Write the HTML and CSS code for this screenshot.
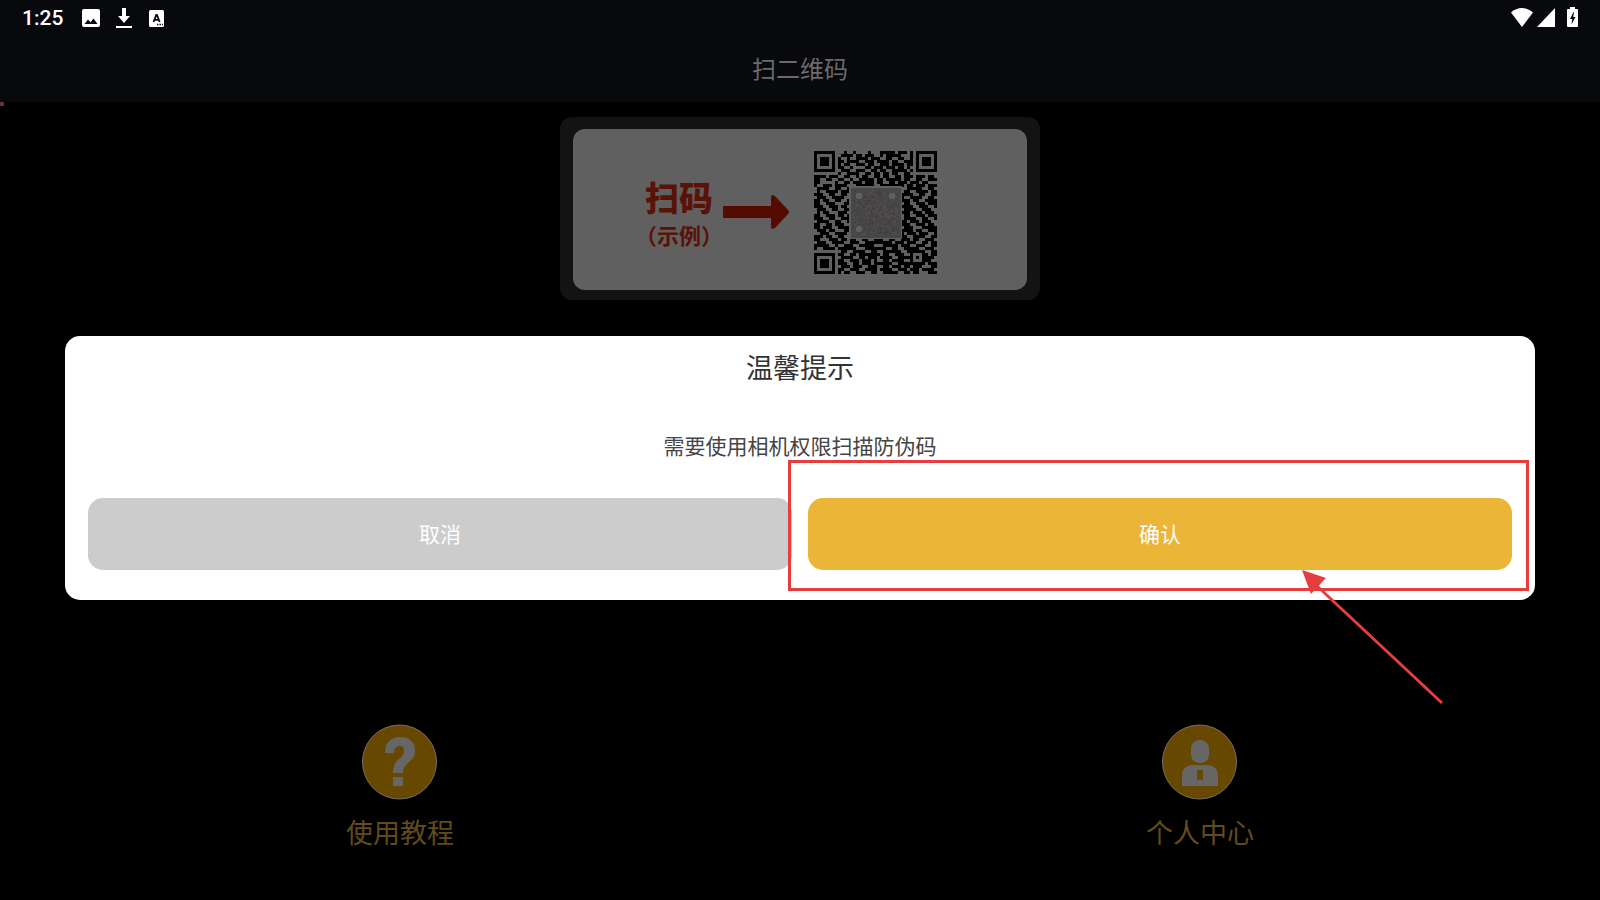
FILE: index.html
```html
<!DOCTYPE html>
<html lang="zh-CN">
<head>
    <meta charset="UTF-8">
    <meta name="viewport" content="width=device-width, initial-scale=1.0">
    <title>扫二维码</title>
    <link rel="stylesheet" href="styles.css">
</head>
<body>
    <header class="header">
        <div class="status-bar">
            <span class="time">1:25</span>
            <svg class="icon-image" width="18" height="18" viewBox="0 0 18 18">
                <path fill="#fff" fill-rule="evenodd" d="M2 0h14a2 2 0 0 1 2 2v14a2 2 0 0 1-2 2H2a2 2 0 0 1-2-2V2a2 2 0 0 1 2-2zM2.500 15h13L11.500 9.500 8.500 13.200 6 10.500z"/>
            </svg>
            <svg class="icon-download" width="16" height="20" viewBox="0 0 16 20">
                <path fill="#fff" d="M6 0h4v8h4l-6 7-6-7h4zM0 18h16v2H0z"/>
            </svg>
            <svg class="icon-text" width="15" height="17" viewBox="0 0 15 17">
                <rect width="15" height="17" rx="1.500" fill="#fff"/>
                <path d="M4.500 12L7.300 5h.6l2.800 7M5.500 9.800h4.200" fill="none" stroke="#08090d" stroke-width="1.800"/>
                <path d="M8 14.500h1.500m1 0H12m1 0h1" stroke="#08090d" stroke-width="1.300"/>
            </svg>
            <div class="status-right">
                <svg width="22" height="19" viewBox="0 0 22 19">
                    <path fill="#fff" d="M11 19L0 4.500C6-1.500 16-1.500 22 4.500z"/>
                </svg>
                <svg width="18" height="19" viewBox="0 0 18 19">
                    <path fill="#fff" d="M18 0v19H0z"/>
                </svg>
                <svg class="icon-battery" width="11" height="20" viewBox="0 0 11 20">
                    <path fill="#fff" d="M3 0h5v2h2a1 1 0 0 1 1 1v16a1 1 0 0 1-1 1H1a1 1 0 0 1-1-1V3a1 1 0 0 1 1-1h2z"/>
                    <path fill="#08090d" d="M6.500 5L3 12h2.200L4.500 17.500 8.500 10H6.200L7 5z"/>
                </svg>
            </div>
        </div>
        <h1>扫二维码</h1>
    </header>

    <main>
        <div class="progress"></div>
        <div class="card">
            <div class="sample">
                <div class="sample-text">
                    <strong>扫码</strong>
                    <span>（示例）</span>
                </div>
                <svg class="sample-arrow" width="66" height="34" viewBox="0 0 66 34">
                    <path fill="#560b00" d="M0 11h48V2q0-2 2-2l2 1 13 14q2 2 0 4L52 33q-4 2-4-1v-9H0z"/>
                </svg>
                <svg class="qr" id="qr" width="123" height="123" viewBox="0 0 41 41" shape-rendering="crispEdges"></svg>
            </div>
        </div>
    </main>

    <nav class="bottom-nav">
        <a href="#">
            <svg width="76" height="76" viewBox="0 0 76 76">
                <circle cx="37.500" cy="38" r="37" fill="#664800" stroke="#77705f"/>
                <path fill="#666" d="M23 29C23 18 29 13 38 13c10 0 15 6 15 14 0 11-12 11-12 22h-10c0-16 11-13 11-22 0-4-2-5-4-5-4 0-6 2-6 7zM31 53h10v9H31z"/>
            </svg>
            <span>使用教程</span>
        </a>
        <a href="#">
            <svg width="76" height="76" viewBox="0 0 76 76">
                <circle cx="37.500" cy="38" r="37" fill="#664800" stroke="#77705f"/>
                <path fill="#666" d="M38 16c6 0 9 4 9 9v5c0 5-3 9-9 9s-9-4-9-9v-5c0-5 3-9 9-9zM20 62V52c0-7 4-11 11-11h14c7 0 11 4 11 11v10z"/>
                <path fill="#664800" d="M35 46h6v10h-6z"/>
            </svg>
            <span>个人中心</span>
        </a>
    </nav>

    <div class="mask">
        <div class="dialog" role="dialog" aria-labelledby="dialog-title">
            <h2 id="dialog-title">温馨提示</h2>
            <p>需要使用相机权限扫描防伪码</p>
            <div class="buttons">
                <button class="cancel">取消</button>
                <div class="confirm-box">
                    <button class="confirm">确认</button>
                    <div class="highlight"></div>
                    <svg class="pointer" width="144" height="136" viewBox="0 0 144 136">
                        <path d="M16 15L142 133" stroke="#e63e3f" stroke-width="3"/>
                        <path fill="#e63e3f" d="M2 0l24 8-15 16z"/>
                    </svg>
                </div>
            </div>
        </div>
    </div>

    <script>
        const rows = [
            "00000000001001000010001111101110111000000",
            "00000000011110110111001011111000110000000",
            "00000000100100111101110011001100111000000",
            "00000000110111100111011110110011110000000",
            "00000000101100111011001110111101100000000",
            "00000000110010000110111011101101011000000",
            "00000000011100111001101100111110110000000",
            "00000000100111100110110110110011000000000",
            "11110111001100101100110110011011101110110",
            "11001100110010011111011011111011001100111",
            "11000001001101110111011001101110111011000",
            "10011101111000111111001111111101101110111",
            "01111001100100000000000000000001111100110",
            "01001111011100000000000000000011001111011",
            "11100110011000000000000000000111100110011",
            "01110011110000000000000000000100111100110",
            "11011001100100000000000000000111011001111",
            "11001110001100000000000000000011001110111",
            "11100111011000000000000000000111100111001",
            "01110011001100000000000000000011110011100",
            "01011000111000000000000000000111011101110",
            "11001110110100000000000000000011001110111",
            "11100110011100000000000000000011110011001",
            "01111001100100000000000000000110111011100",
            "11001101110000000000000000000111001110110",
            "11011100111100000000000000000011100011111",
            "01110110001100000000000000000111101100111",
            "00111001111000000000000000000101110111001",
            "11101100110000000000000000000110011110011",
            "11000111011011001100111001100111011001110",
            "01110011110011100111111111011101110011011",
            "11111001001110011111000111110111001110011",
            "10011110111111000111111100110011111001110",
            "00000000011001111001100111111001111110011",
            "00000000110011011111110110011100100011011",
            "00000000011110011011101111001111101011110",
            "00000000110011101110100110111100100011100",
            "00000000111001101110111111001111111110111",
            "00000000011101110011100110111011011100011",
            "00000000110011100111101111001110111011110",
            "00000000101100111001100111110011011000111"
        ];

        let path = "";
        rows.forEach((row, y) => {
            [...row].forEach((cell, x) => {
                if (cell === "1") path += `M${x} ${y}h1v1h-1z`;
            });
        });

        // corner squares
        const finder = (x, y) => `
            <rect x="${x - 1}" y="${y - 1}" width="9" height="9" fill="#606060"/>
            <rect x="${x}" y="${y}" width="7" height="7"/>
            <rect x="${x + 1}" y="${y + 1}" width="5" height="5" fill="#606060"/>
            <rect x="${x + 2}" y="${y + 2}" width="3" height="3"/>
        `;

        // small grainy code in the middle
        let seed = 7;
        let grain = "";
        for (let y = 0; y < 30; y++) {
            for (let x = 0; x < 30; x++) {
                seed = (seed * 16807) % 2147483647;
                const c = ["#454343", "#4a4848", "#504e4e", "#413e3f"][seed % 4];
                grain += `<rect x="${x / 2}" y="${y / 2}" width=".5" height=".5" fill="${c}"/>`;
            }
        }

        document.getElementById("qr").innerHTML = `
            <path d="${path}"/>
            ${finder(0, 0)}
            ${finder(34, 0)}
            ${finder(0, 34)}
            <path fill="#606060" d="M11.800 11.800h17.400v17.400H11.800z"/>
            <path fill="#484747" d="M12.300 12.300h16.600v16.600H12.300z"/>
            <g transform="translate(13 13)" shape-rendering="auto">${grain}</g>
            <g fill="#606060" shape-rendering="auto">
                <circle cx="15" cy="15" r="1.100"/>
                <circle cx="26" cy="15" r="1.100"/>
                <circle cx="15" cy="26" r="1.100"/>
            </g>
        `;
    </script>
</body>
</html>
```
FILE: styles.css
```css
* {
    box-sizing: border-box;
}
body {
    font-family: Roboto, "Noto Sans CJK SC", sans-serif;
    background-color: #000;
    margin: 0;
    display: flex;
    flex-direction: column;
    min-height: 100vh;
}
h1, h2, p {
    margin: 0;
    font-weight: normal;
    text-align: center;
}
.header {
    background: #08090d;
}
.status-bar {
    display: flex;
    align-items: center;
    height: 36px;
    padding: 0 22px;
}
.time {
    color: #fff;
    font-size: 21px;
    font-weight: 500;
    line-height: 36px;
}
.icon-image {
    margin-left: 19px;
}
.icon-download {
    margin-left: 16px;
}
.icon-text {
    margin-left: 17px;
}
.status-right {
    display: flex;
    align-items: center;
    gap: 4px;
    margin-left: auto;
    padding-bottom: 2px;
}
.icon-battery {
    margin-left: 8px;
}
h1 {
    color: #6b6b6b;
    font-size: 24px;
    line-height: 30px;
    padding: 19px 0 17px;
}
.progress {
    width: 4px;
    height: 4px;
    background: #6f2e33;
}
.card {
    width: 480px;
    max-width: 100%;
    margin: 11px auto 0;
    padding: 12px 13px 10px;
    background: #131313;
    border-radius: 12px;
}
.sample {
    display: flex;
    align-items: center;
    justify-content: center;
    height: 161px;
    padding: 5px 28px 0 0;
    background: #606060;
    border-radius: 12px;
}
.sample-text {
    display: flex;
    flex-direction: column;
    align-items: center;
    padding-top: 10px;
    color: #591206;
    font-weight: bold;
}
.sample-text strong {
    font-size: 34px;
    line-height: 40px;
}
.sample-text span {
    font-size: 22px;
    line-height: 36px;
}
.sample-arrow {
    margin-right: 25px;
}
.bottom-nav {
    display: grid;
    grid-template-columns: 1fr 1fr;
    margin-top: auto;
    padding-bottom: 46px;
}
.bottom-nav a {
    display: flex;
    flex-direction: column;
    align-items: center;
    gap: 14px;
    color: #624a1b;
    font-size: 27px;
    line-height: 40px;
    text-decoration: none;
}
.mask {
    position: fixed;
    top: 36px;
    right: 0;
    bottom: 0;
    left: 0;
    display: flex;
    align-items: center;
    padding: 0 65px;
}
.dialog {
    width: 100%;
    padding: 0 23px 30px;
    background: #fff;
    border-radius: 15px;
}
h2 {
    color: #333;
    font-size: 27px;
    line-height: 66px;
}
p {
    margin: 30px 0 36px;
    color: #444;
    font-size: 21px;
    line-height: 30px;
}
.buttons {
    display: grid;
    grid-template-columns: 1fr 1fr;
    gap: 16px;
}
button {
    width: 100%;
    height: 72px;
    padding: 0 0 2px;
    border: none;
    border-radius: 15px;
    color: #fff;
    font-family: inherit;
    font-size: 21px;
    cursor: pointer;
}
.cancel {
    background: #ccc;
}
.confirm {
    background: #ebb538;
}
.confirm-box {
    position: relative;
}
.highlight {
    position: absolute;
    top: -38px;
    right: -17px;
    bottom: -21px;
    left: -20px;
    border: 3px solid #e63e3f;
    pointer-events: none;
}
.pointer {
    position: absolute;
    top: 72px;
    right: 68px;
    pointer-events: none;
}
```
